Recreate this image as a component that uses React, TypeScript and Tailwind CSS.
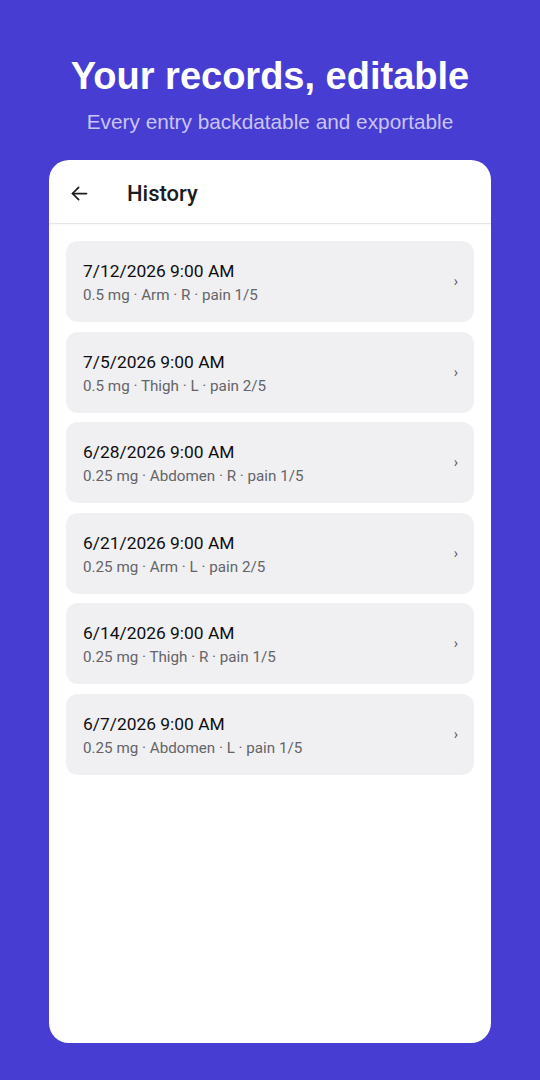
const records = [
  { date: "7/12/2026 9:00 AM", detail: "0.5 mg · Arm · R · pain 1/5" },
  { date: "7/5/2026 9:00 AM", detail: "0.5 mg · Thigh · L · pain 2/5" },
  { date: "6/28/2026 9:00 AM", detail: "0.25 mg · Abdomen · R · pain 1/5" },
  { date: "6/21/2026 9:00 AM", detail: "0.25 mg · Arm · L · pain 2/5" },
  { date: "6/14/2026 9:00 AM", detail: "0.25 mg · Thigh · R · pain 1/5" },
  { date: "6/7/2026 9:00 AM", detail: "0.25 mg · Abdomen · L · pain 1/5" },
];

export default function App() {
  return (
    <div className="w-[540px] h-[1080px] bg-[#473dd3] flex flex-col items-center overflow-hidden">
      {/* Headline */}
      <h1 className="mt-[54px] text-white font-bold text-[38px] leading-[44px] font-['Liberation_Sans',Arial,sans-serif]">
        Your records, editable
      </h1>
      <p className="mt-[12px] text-[#c9c5f5] text-[20.8px] leading-[24px] font-['Liberation_Sans',Arial,sans-serif]">
        Every entry backdatable and exportable
      </p>

      {/* Phone card */}
      <div className="mt-[26px] w-[442px] h-[883px] bg-white rounded-[20px] overflow-hidden flex flex-col font-['Roboto',sans-serif]">
        {/* App bar */}
        <div className="h-[64px] flex items-center border-b border-[#e6e6e9] shadow-[0_1px_2px_rgba(0,0,0,0.04)]">
          <svg className="ml-[20px] mt-[3px] w-[21px] h-[21px]" viewBox="0 0 24 24" fill="none" stroke="#1c1c1e" strokeWidth="2" strokeLinecap="round" strokeLinejoin="round">
            <path d="M20 12H4" />
            <path d="M11 5l-7 7 7 7" />
          </svg>
          <span className="ml-[37px] mt-[3px] text-[22px] font-medium text-[#1c1c1e]">History</span>
        </div>

        {/* Record list */}
        <div className="flex flex-col gap-[9.5px] px-[17px] pt-[17px]">
          {records.map((r) => (
            <div key={r.date} className="h-[81px] bg-[#f0f0f2] rounded-[12px] flex items-center pl-[17px] pr-[16px]">
              <div className="flex-1 flex flex-col pt-[2px]">
                <span className="text-[17.4px] leading-[22px] text-[#0e0e10]">{r.date}</span>
                <span className="mt-[3px] text-[15.2px] leading-[20px] text-[#646469]">{r.detail}</span>
              </div>
              <span className="text-[14px] text-[#55555a]">›</span>
            </div>
          ))}
        </div>
      </div>
    </div>
  );
}
